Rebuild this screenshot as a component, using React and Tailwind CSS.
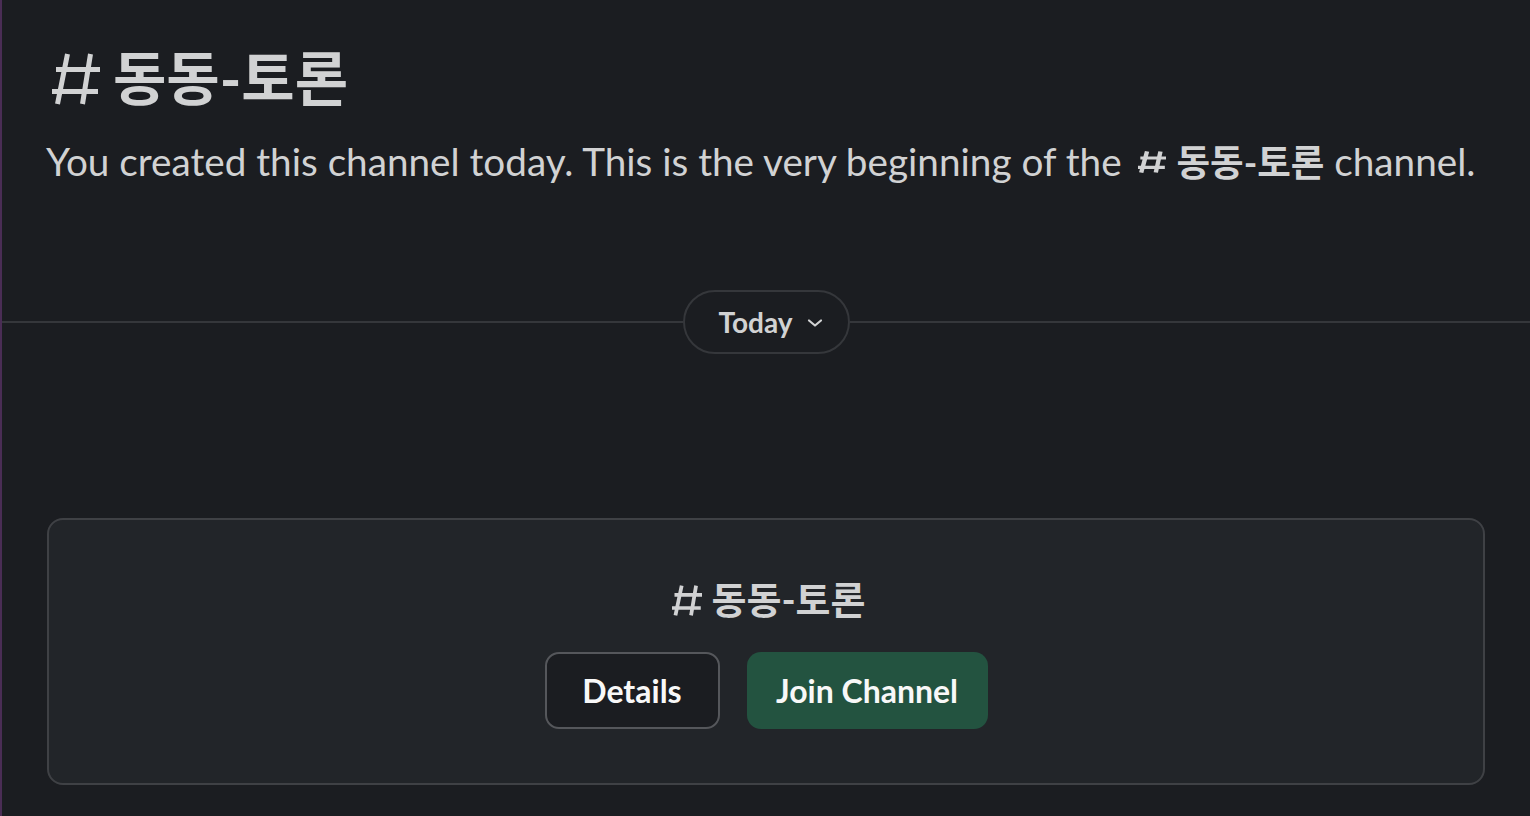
import React from "react";

function Hash({ w, h, sw, className = "" }) {
  return (
    <svg width={w} height={h} viewBox="0 0 48 52" fill="none" className={className} preserveAspectRatio="none">
      <path d="M15.5 1L5.5 51M38.5 1L30.5 51M4 16.5H48M0 38.5H46" stroke="#d1d2d3" strokeWidth={sw} />
    </svg>
  );
}

function Chevron() {
  return (
    <svg width="16" height="10" viewBox="0 0 16 10" fill="none" className="ml-[15px] mt-[2px]">
      <path d="M2 2.5L8 7.5l6-5" stroke="#d1d2d3" strokeWidth="2.2" strokeLinecap="round" strokeLinejoin="round" />
    </svg>
  );
}

export default function App() {
  const font = { fontFamily: "Lato, 'Noto Sans CJK KR', sans-serif" };
  return (
    <div className="h-[816px] w-[1530px] overflow-hidden bg-[#1b1d21] border-l-2 border-[#4a2d55] text-[#d1d2d3]" style={font}>
      <div className="px-[44px] pt-[38px]">
        <h1 className="flex items-center h-[80px] ml-[6px] text-[58px] font-bold leading-[80px]">
          <Hash w={48} h={52} sw={5} className="mt-[2px] mr-[13px] shrink-0" />
          <span>동동-토론</span>
        </h1>
        <p className="mt-[18px] h-[50px] text-[38.7px] leading-[50px] whitespace-nowrap">
          You created this channel today. This is the very beginning of the{" "}
          <Hash w={28} h={22} sw={7.5} className="inline-block align-[3px] ml-[7px] mr-[10px]" />
          <span className="font-bold text-[36.5px]">동동-토론</span> channel.
        </p>
      </div>
      <div className="mt-[104px] flex items-center h-[64px]">
        <div className="flex-1 h-[2px] bg-[#35373b]" />
        <div className="h-[64px] w-[167px] rounded-full border-2 border-[#35373b] flex items-center pl-[34px]">
          <span className="text-[28px] font-bold">Today</span>
          <Chevron />
        </div>
        <div className="flex-1 h-[2px] bg-[#35373b]" />
      </div>
      <div className="mx-[45px] mt-[164px] h-[267px] rounded-[16px] border-2 border-[#3f4145] bg-[#222529] flex flex-col items-center pt-[54px]">
        <div className="flex items-center h-[50px] text-[38px] font-bold leading-[50px] ml-[6px]">
          <Hash w={30} h={31} sw={6} className="mt-[2px] mr-[9px] shrink-0" />
          <span>동동-토론</span>
        </div>
        <div className="mt-[28px] flex gap-[27px]">
          <button className="h-[77px] w-[175px] rounded-[14px] border-2 border-[#55575b] bg-[#1b1d21] text-[32px] font-bold text-[#f8f8f8]">Details</button>
          <button className="h-[77px] w-[241px] rounded-[14px] bg-[#235340] text-[32px] font-bold text-[#f8f8f8]">Join Channel</button>
        </div>
      </div>
    </div>
  );
}
